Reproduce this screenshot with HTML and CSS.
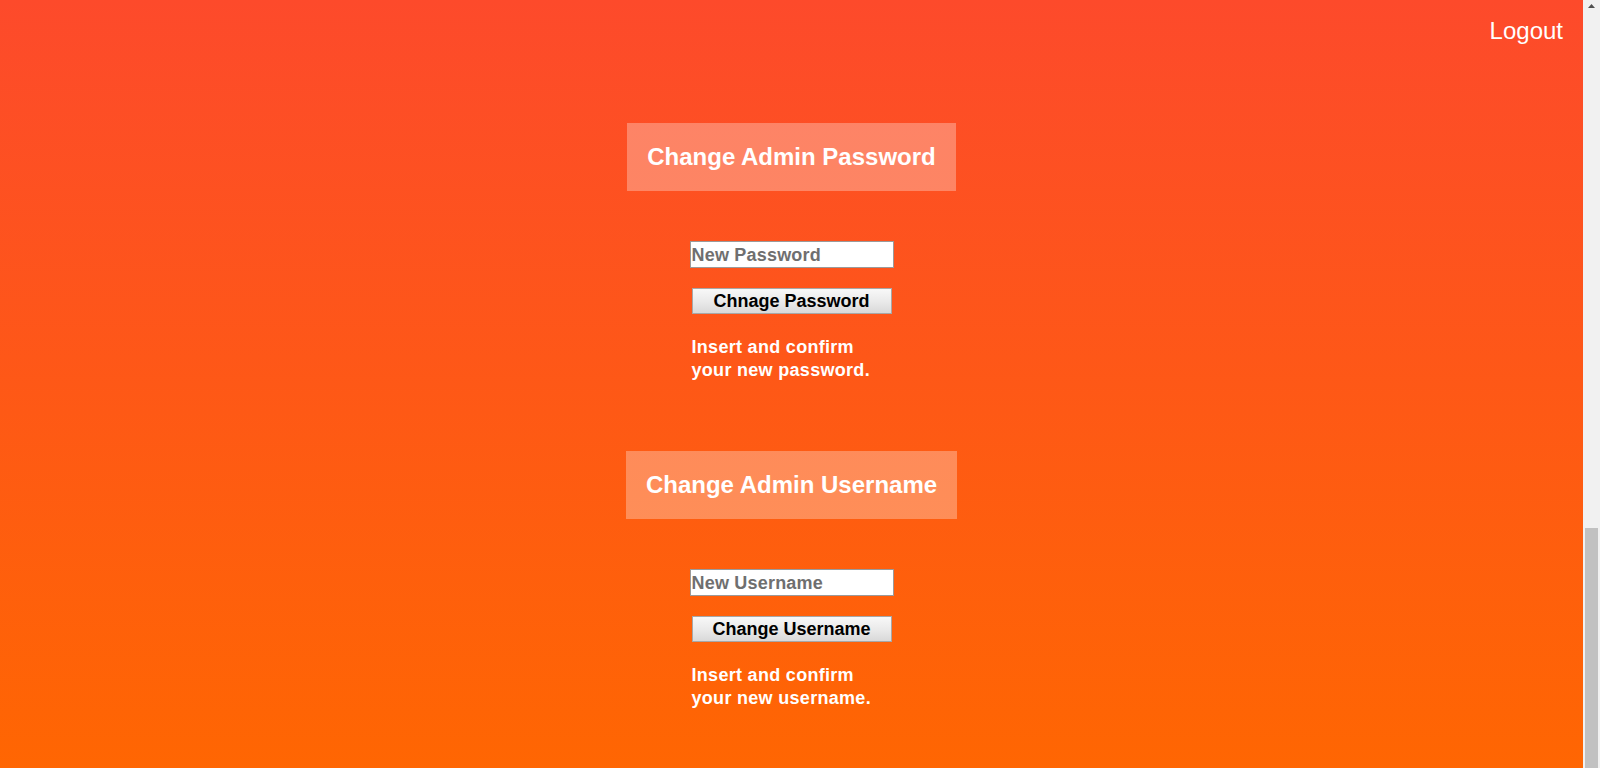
FILE: index.html
```html
<!DOCTYPE html>
<html lang="en">
<head>
<meta charset="utf-8">
<title>Admin Settings</title>
<link rel="stylesheet" href="styles.css">
</head>
<body>
<div class="page">
  <main class="main">
    <header class="topbar">
      <a class="logout" href="#">Logout</a>
    </header>

    <section class="panel panel-first">
      <h2 class="panel-title">Change Admin Password</h2>
      <form class="panel-form">
        <input class="field" type="password" placeholder="New Password">
        <button class="btn" type="button">Chnage Password</button>
        <p class="hint">Insert and confirm your new password.</p>
      </form>
    </section>

    <section class="panel">
      <h2 class="panel-title">Change Admin Username</h2>
      <form class="panel-form">
        <input class="field" type="text" placeholder="New Username">
        <button class="btn" type="button">Change Username</button>
        <p class="hint">Insert and confirm your new username.</p>
      </form>
    </section>
  </main>

  <div class="scrollbar" aria-hidden="true">
    <div class="scroll-arrow">
      <svg width="7" height="4" viewBox="0 0 7 4"><path d="M3.5 0 L7 4 L0 4 Z" fill="#505050"/></svg>
    </div>
    <div class="scroll-track">
      <div class="scroll-thumb"></div>
    </div>
  </div>
</div>
</body>
</html>
```

FILE: styles.css
```css
* { box-sizing: border-box; }

html, body {
  margin: 0;
  padding: 0;
  height: 100%;
  overflow: hidden;
}

body {
  font-family: "Liberation Sans", Arial, sans-serif;
}

.page {
  display: flex;
  height: 768px;
}

.main {
  flex: 1;
  display: flex;
  flex-direction: column;
  background: linear-gradient(to bottom, #fd4a2b 0%, #ff6602 100%);
}

.topbar {
  display: flex;
  justify-content: flex-end;
  padding: 17px 20px 0 0;
}

.logout {
  color: #ffffff;
  font-size: 24px;
  line-height: 28px;
  text-decoration: none;
}

.panel {
  display: flex;
  flex-direction: column;
  align-items: center;
  margin-top: 69px;
}

.panel-first {
  margin-top: 78px;
}

.panel-title {
  margin: 0;
  padding: 20px;
  background: rgba(255, 255, 255, 0.3);
  color: #ffffff;
  font-size: 24px;
  line-height: 28px;
  font-weight: bold;
}

.panel-form {
  display: flex;
  flex-direction: column;
  width: 204px;
  margin-top: 50px;
}

.field {
  width: 204px;
  height: 27px;
  margin: 0;
  padding: 1px 1px 0;
  border: 1px solid #9a9a9a;
  background: #ffffff;
  font-family: "Liberation Sans", Arial, sans-serif;
  font-size: 18px;
  font-weight: bold;
  letter-spacing: 0.2px;
  color: #333;
  outline: none;
}

.field::placeholder {
  color: #6f6f6f;
  opacity: 1;
}

.btn {
  width: 200px;
  height: 26px;
  margin: 20px 0 0 2px;
  padding: 0;
  border: 1px solid #a7a7a7;
  border-radius: 0;
  background: linear-gradient(to bottom, #f8f8f8 0%, #e9e9e9 55%, #d9d9d9 100%);
  font-family: "Liberation Sans", Arial, sans-serif;
  font-size: 18px;
  font-weight: bold;
  color: #000000;
  line-height: 24px;
}

.hint {
  margin: 22px 0 0 2px;
  width: 200px;
  color: #ffffff;
  font-size: 18px;
  font-weight: bold;
  letter-spacing: 0.3px;
  line-height: 23px;
}

.scrollbar {
  width: 17px;
  display: flex;
  flex-direction: column;
  background: #f1f1f1;
}

.scroll-arrow {
  height: 17px;
  display: flex;
  justify-content: center;
  padding-top: 4px;
}

.scroll-track {
  flex: 1;
  display: flex;
  flex-direction: column;
  justify-content: flex-end;
  padding: 0 2px;
}

.scroll-thumb {
  height: 240px;
  background: #c1c1c1;
}
```
